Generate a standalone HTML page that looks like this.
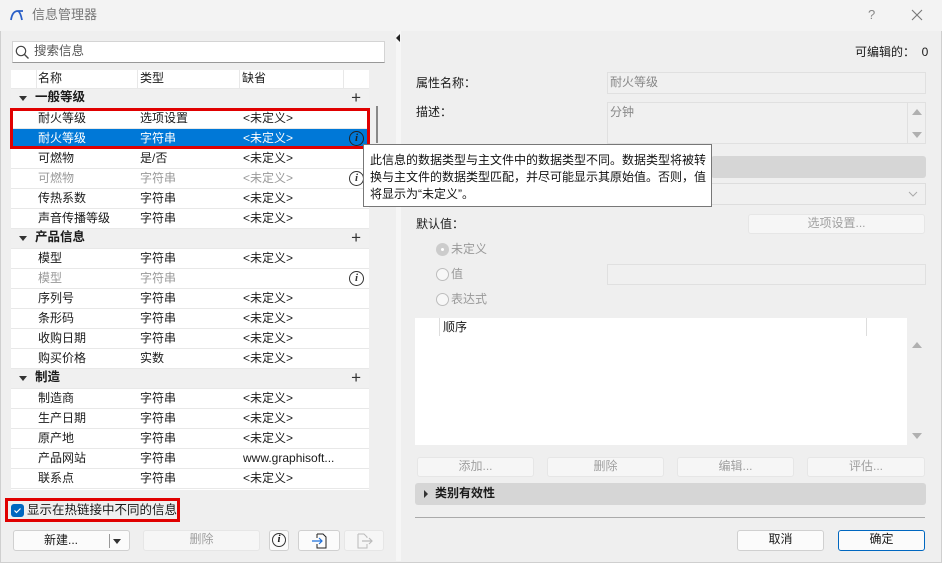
<!DOCTYPE html>
<html><head><meta charset="utf-8"><style>
*{box-sizing:border-box;margin:0;padding:0}
body{width:942px;height:563px;overflow:hidden;background:#efefef;font-family:"Liberation Sans","Noto Sans CJK SC",sans-serif;font-size:12px;line-height:15px;color:#1a1a1a;position:relative}
.a{position:absolute}
.row{position:absolute;left:11px;width:358px;height:20px;background:#fff;border-bottom:1px solid #e8e8e8}
.row span{position:absolute;top:2px;white-space:nowrap}
.row .n{left:27px}.row .t{left:129px}.row .d{left:232px}
.grp{background:#f0f0f0;font-weight:bold}
.grp .n{left:24px;font-size:12.5px;top:1px}
.grp .tri{left:8px;top:7px;width:0;height:0;border-left:4px solid transparent;border-right:4px solid transparent;border-top:5px solid #333}
.plus{position:absolute;right:8px;top:0;font-size:17px;font-weight:normal;line-height:18px;color:#333}
.gray span{color:#999}
.info{position:absolute;right:5px;top:2px;width:15px;height:15px;border:1.3px solid #333;border-radius:50%;font-size:11px;line-height:12px;text-align:center;font-family:"Liberation Serif",serif;font-weight:bold}
.btn{position:absolute;height:20px;border:1px solid #d0d0d0;border-radius:3px;background:#fbfbfb;text-align:center;line-height:17px;color:#1a1a1a}
.dis{background:#f6f6f6;border-color:#e6e6e6;color:#a0a0a0}
.fld{position:absolute;background:#f0f0f0;border:1px solid #e0e0e0;color:#888;padding:2px 2px}
.radio{position:absolute;width:13px;height:13px;border:1px solid #bdbdbd;border-radius:50%;background:#f7f7f7}
.rl{position:absolute;color:#999}
</style></head><body>
<div class="a" style="left:0;top:0;width:942px;height:31px;background:#f3f3f3"></div>
<svg class="a" style="left:10px;top:9px" width="14" height="12"><path d="M1 11 C2 4 5 2 8 2 L13 2 M8 2 C10 3 11 6 12 11" stroke="#2a5fc7" stroke-width="1.8" fill="none"/></svg>
<div class="a" style="left:32px;top:7px;color:#777;font-size:13px">信息管理器</div>
<div class="a" style="left:868px;top:7px;color:#888;font-size:13px">?</div>
<svg class="a" style="left:911px;top:9px" width="12" height="12"><path d="M1 1L11 11M11 1L1 11" stroke="#777" stroke-width="1.1"/></svg>
<div class="a" style="left:0;top:31px;width:942px;height:532px;border:1px solid #cfcfcf;border-top:none"></div>

<div class="a" style="left:12px;top:41px;width:373px;height:22px;background:#fff;border:1px solid #d4d4d4;border-bottom-color:#999"></div>
<svg class="a" style="left:15px;top:45px" width="15" height="15"><circle cx="6" cy="6" r="4.7" stroke="#444" fill="none" stroke-width="1.2"/><path d="M9.5 9.5L13.5 13.5" stroke="#444" stroke-width="1.3"/></svg>
<div class="a" style="left:34px;top:44px;color:#555;font-size:12.5px">搜索信息</div>

<div class="a" style="left:11px;top:70px;width:358px;height:420px;background:#fff"></div>
<div class="a" style="left:11px;top:70px;width:358px;height:19px;background:#fff;border-bottom:1px solid #e8e8e8"></div>
<div class="a" style="left:36px;top:70px;width:1px;height:19px;background:#e8e8e8"></div>
<div class="a" style="left:137px;top:70px;width:1px;height:19px;background:#e8e8e8"></div>
<div class="a" style="left:239px;top:70px;width:1px;height:19px;background:#e8e8e8"></div>
<div class="a" style="left:343px;top:70px;width:1px;height:19px;background:#e8e8e8"></div>
<div class="a" style="left:38px;top:71px">名称</div>
<div class="a" style="left:140px;top:71px">类型</div>
<div class="a" style="left:242px;top:71px">缺省</div>

<div class="row grp" style="top:89px"><i class="tri a"></i><span class="n">一般等级</span><b class="plus">+</b></div>
<div class="row" style="top:109px"><span class="n">耐火等级</span><span class="t">选项设置</span><span class="d">&lt;未定义&gt;</span></div>
<div class="row" style="top:129px;background:#0078d7;color:#fff"><span class="n">耐火等级</span><span class="t">字符串</span><span class="d">&lt;未定义&gt;</span><i class="info" style="color:#222;border-color:#222">i</i></div>
<div class="row" style="top:149px"><span class="n">可燃物</span><span class="t">是/否</span><span class="d">&lt;未定义&gt;</span></div>
<div class="row gray" style="top:169px"><span class="n">可燃物</span><span class="t">字符串</span><span class="d">&lt;未定义&gt;</span><i class="info" style="color:#333">i</i></div>
<div class="row" style="top:189px"><span class="n">传热系数</span><span class="t">字符串</span><span class="d">&lt;未定义&gt;</span></div>
<div class="row" style="top:209px"><span class="n">声音传播等级</span><span class="t">字符串</span><span class="d">&lt;未定义&gt;</span></div>
<div class="row grp" style="top:229px"><i class="tri a"></i><span class="n">产品信息</span><b class="plus">+</b></div>
<div class="row" style="top:249px"><span class="n">模型</span><span class="t">字符串</span><span class="d">&lt;未定义&gt;</span></div>
<div class="row gray" style="top:269px"><span class="n">模型</span><span class="t">字符串</span><i class="info" style="color:#333">i</i></div>
<div class="row" style="top:289px"><span class="n">序列号</span><span class="t">字符串</span><span class="d">&lt;未定义&gt;</span></div>
<div class="row" style="top:309px"><span class="n">条形码</span><span class="t">字符串</span><span class="d">&lt;未定义&gt;</span></div>
<div class="row" style="top:329px"><span class="n">收购日期</span><span class="t">字符串</span><span class="d">&lt;未定义&gt;</span></div>
<div class="row" style="top:349px"><span class="n">购买价格</span><span class="t">实数</span><span class="d">&lt;未定义&gt;</span></div>
<div class="row grp" style="top:369px"><i class="tri a"></i><span class="n">制造</span><b class="plus">+</b></div>
<div class="row" style="top:389px"><span class="n">制造商</span><span class="t">字符串</span><span class="d">&lt;未定义&gt;</span></div>
<div class="row" style="top:409px"><span class="n">生产日期</span><span class="t">字符串</span><span class="d">&lt;未定义&gt;</span></div>
<div class="row" style="top:429px"><span class="n">原产地</span><span class="t">字符串</span><span class="d">&lt;未定义&gt;</span></div>
<div class="row" style="top:449px"><span class="n">产品网站</span><span class="t">字符串</span><span class="d">www.graphisoft...</span></div>
<div class="row" style="top:469px"><span class="n">联系点</span><span class="t">字符串</span><span class="d">&lt;未定义&gt;</span></div>
<div class="a" style="left:376px;top:106px;width:2px;height:37px;background:#888"></div>
<div class="a" style="left:10px;top:108px;width:360px;height:41px;border:3px solid #e00000"></div>

<div class="a" style="left:363px;top:144px;width:349px;height:63px;background:#fff;border:1px solid #777;padding:7px 0 0 6px;font-size:12px;line-height:17px;color:#111;z-index:5">此信息的数据类型与主文件中的数据类型不同。数据类型将被转换与主文件的数据类型匹配，并尽可能显示其原始值。否则，值将显示为“未定义”。</div>

<div class="a" style="left:5px;top:498px;width:175px;height:24px;border:3px solid #e00000"></div>
<div class="a" style="left:11px;top:504px;width:13px;height:13px;background:#0067c0;border-radius:3px"></div>
<svg class="a" style="left:12px;top:505px" width="11" height="11"><path d="M2.5 5.5L4.5 7.5L8.5 3.5" stroke="#fff" stroke-width="1.2" fill="none"/></svg>
<div class="a" style="left:27px;top:503px;font-size:12.5px">显示在热链接中不同的信息</div>
<div class="btn" style="left:13px;top:530px;width:117px;height:21px"><span style="position:absolute;left:30px;top:1px">新建...</span><span style="position:absolute;left:95px;top:3px;width:1px;height:14px;background:#999"></span><span style="position:absolute;left:99px;top:8px;border-left:4px solid transparent;border-right:4px solid transparent;border-top:5px solid #333"></span></div>
<div class="btn dis" style="left:143px;top:530px;width:117px;height:21px">删除</div>
<div class="btn" style="left:269px;top:530px;width:20px;height:21px"><i class="info" style="right:2px;top:2px;width:14px;height:14px;line-height:11px">i</i></div>
<div class="btn" style="left:298px;top:530px;width:42px;height:21px"><svg style="position:absolute;left:12px;top:2px" width="18" height="16"><path d="M6 1H12L15 4V15H6V11M6 5V1" stroke="#222" fill="none"/><path d="M1 8H11M8 5L11 8L8 11" stroke="#1e6fd9" stroke-width="1.2" fill="none"/></svg></div>
<div class="btn dis" style="left:344px;top:530px;width:40px;height:21px"><svg style="position:absolute;left:11px;top:2px" width="18" height="16"><path d="M2 1H8L11 4V5M11 11V15H2V1" stroke="#bbb" fill="none"/><path d="M6 8H16M13 5L16 8L13 11" stroke="#bbb" stroke-width="1.2" fill="none"/></svg></div>

<div class="a" style="left:396px;top:31px;width:5px;height:530px;background:#f6f6f6"></div>
<div class="a" style="left:396px;top:34px;border-top:4px solid transparent;border-bottom:4px solid transparent;border-right:4px solid #222"></div>

<div class="a" style="left:855px;top:45px">可编辑的：&nbsp;&nbsp;0</div>
<div class="a" style="left:416px;top:76px">属性名称：</div>
<div class="fld" style="left:607px;top:72px;width:319px;height:22px">耐火等级</div>
<div class="a" style="left:416px;top:105px">描述：</div>
<div class="fld" style="left:607px;top:102px;width:319px;height:42px">分钟</div>
<div class="a" style="left:907px;top:103px;width:1px;height:40px;background:#e0e0e0"></div>
<div class="a" style="left:912px;top:109px;border-left:5px solid transparent;border-right:5px solid transparent;border-bottom:6px solid #b0b0b0"></div>
<div class="a" style="left:912px;top:132px;border-left:5px solid transparent;border-right:5px solid transparent;border-top:6px solid #b0b0b0"></div>
<div class="a" style="left:711px;top:156px;width:215px;height:22px;background:#d6d6d6;border-radius:3px"></div>
<div class="a" style="left:711px;top:183px;width:215px;height:22px;background:#f0f0f0;border:1px solid #ddd;border-left:none"></div>
<svg class="a" style="left:908px;top:190px" width="10" height="8"><path d="M1 2L5 6L9 2" stroke="#aaa" fill="none"/></svg>
<div class="a" style="left:416px;top:217px">默认值：</div>
<div class="btn dis" style="left:748px;top:214px;width:177px;height:20px">选项设置...</div>
<div class="radio" style="left:436px;top:243px;background:#ccc;border-color:#ccc"><span style="position:absolute;left:4px;top:4px;width:3px;height:3px;background:#fff;border-radius:50%"></span></div>
<div class="rl" style="left:451px;top:242px">未定义</div>
<div class="radio" style="left:436px;top:268px"></div><div class="rl" style="left:451px;top:267px">值</div>
<div class="fld" style="left:607px;top:264px;width:319px;height:21px"></div>
<div class="radio" style="left:436px;top:293px"></div><div class="rl" style="left:451px;top:292px">表达式</div>
<div class="a" style="left:415px;top:318px;width:492px;height:127px;background:#fff"></div>
<div class="a" style="left:439px;top:318px;width:1px;height:18px;background:#ddd"></div>
<div class="a" style="left:866px;top:318px;width:1px;height:18px;background:#ddd"></div>
<div class="a" style="left:443px;top:320px">顺序</div>
<div class="a" style="left:912px;top:342px;border-left:5px solid transparent;border-right:5px solid transparent;border-bottom:6px solid #b0b0b0"></div>
<div class="a" style="left:912px;top:433px;border-left:5px solid transparent;border-right:5px solid transparent;border-top:6px solid #b0b0b0"></div>
<div class="btn dis" style="left:417px;top:457px;width:117px">添加...</div>
<div class="btn dis" style="left:547px;top:457px;width:117px">删除</div>
<div class="btn dis" style="left:677px;top:457px;width:117px">编辑...</div>
<div class="btn dis" style="left:807px;top:457px;width:118px">评估...</div>
<div class="a" style="left:415px;top:483px;width:511px;height:22px;background:#d6d6d6;border-radius:3px"></div>
<div class="a" style="left:424px;top:490px;border-top:4px solid transparent;border-bottom:4px solid transparent;border-left:4px solid #333"></div>
<div class="a" style="left:435px;top:486px;font-weight:bold">类别有效性</div>
<div class="a" style="left:415px;top:517px;width:510px;height:1px;background:#aaa"></div>
<div class="btn" style="left:737px;top:530px;width:87px;height:21px">取消</div>
<div class="btn" style="left:838px;top:530px;width:87px;height:21px;border:1.5px solid #0067c0">确定</div>
</body></html>
